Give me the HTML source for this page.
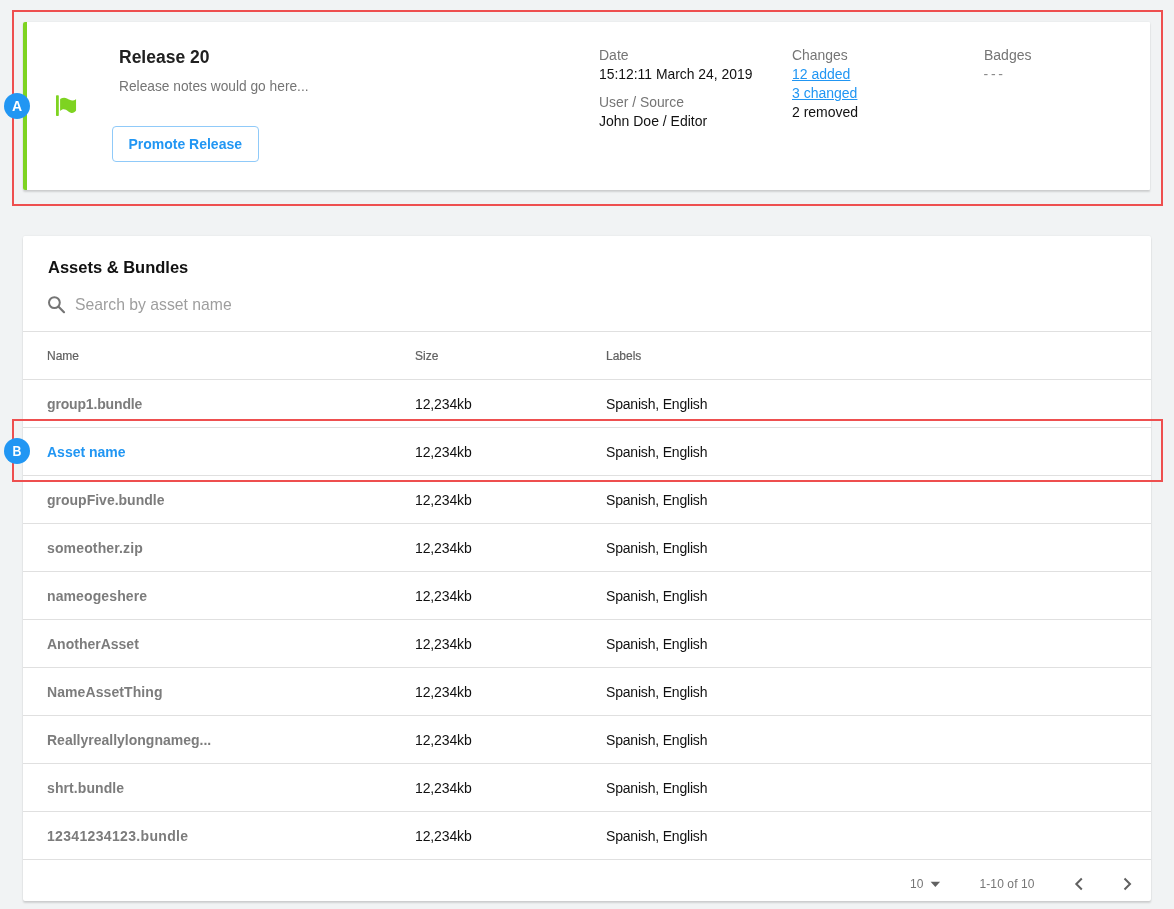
<!DOCTYPE html>
<html><head><meta charset="utf-8">
<style>
*{box-sizing:border-box;margin:0;padding:0}
html,body{width:1174px;height:909px;overflow:hidden}
body{background:#f1f3f4;font-family:"Liberation Sans",sans-serif;position:relative;color:#000}
.abs{position:absolute;white-space:nowrap}
.t{position:absolute;white-space:nowrap}
.card{position:absolute;background:#fff;border-radius:2px;box-shadow:0 2px 2px rgba(0,0,0,.14),0 0 2px rgba(0,0,0,.08)}
.red{position:absolute;border:2px solid #ee4f4f}
.dot{position:absolute;width:26px;height:26px;border-radius:50%;background:#2196f3}
.hl{position:absolute;left:23px;width:1128px;height:1px;background:#e0e0e0}
</style></head><body><div id="wrap" style="position:absolute;left:0;top:0;width:1174px;height:909px;will-change:transform">
<div class="card" style="left:23px;top:22px;width:1127px;height:168px;overflow:hidden;border-radius:2px 1px 1px 2px"><div style="position:absolute;left:0;top:0;width:4px;height:100%;background:#7ed321"></div></div>
<div class="card" style="left:23px;top:236px;width:1128px;height:665px"></div>
<svg class="abs" style="left:50px;top:90px" width="34" height="32" viewBox="0 0 34 32"><rect x="6" y="5.3" width="2.8" height="20.6" rx="0.7" fill="#7ed321"/><path d="M10.1 9.6 Q10.1 9 11 8.6 C12.5 7.8 15 7.4 17 8.6 C19 9.8 21 10.8 23 10.5 C24.5 10.2 25.5 9.6 26.05 8.9 L26.05 20.6 C25 22.5 23 23.2 21.5 23 C19.5 22.7 18 21 16 19.8 C14 18.7 12 19 10.1 21 Z" fill="#7ed321"/></svg>

<div class="t" style="left:119px;top:47px;font-size:17.5px;line-height:20px;font-weight:bold;color:#212121">Release 20</div>
<div class="t" style="left:119px;top:79px;font-size:13.75px;line-height:15px;color:#757575">Release notes would go here...</div>
<div class="abs" style="left:112px;top:126px;width:147px;height:36px;border:1px solid #90caf9;border-radius:4px"></div>
<div class="t" style="left:128.4px;top:136px;font-size:14px;line-height:16px;font-weight:bold;color:#2196f3">Promote Release</div>
<div class="t" style="left:599px;top:47px;font-size:14px;line-height:16px;color:#757575">Date</div>
<div class="t" style="left:599px;top:66px;font-size:13.9px;line-height:16px;color:#111">15:12:11 March 24, 2019</div>
<div class="t" style="left:599px;top:94px;font-size:13.9px;line-height:16px;color:#757575">User / Source</div>
<div class="t" style="left:599px;top:113px;font-size:14px;line-height:16px;color:#111">John Doe / Editor</div>
<div class="t" style="left:792px;top:47px;font-size:13.9px;line-height:16px;color:#757575">Changes</div>
<div class="t" style="left:792px;top:66px;font-size:14px;line-height:16px;color:#2196f3;text-decoration:underline">12 added</div>
<div class="t" style="left:792px;top:85px;font-size:14px;line-height:16px;color:#2196f3;text-decoration:underline">3 changed</div>
<div class="t" style="left:792px;top:104px;font-size:14px;line-height:16px;color:#111">2 removed</div>
<div class="t" style="left:984px;top:47px;font-size:14px;line-height:16px;color:#757575">Badges</div>
<div class="t" style="left:983.5px;top:66px;font-size:14px;line-height:16px;color:#8c8c8c;word-spacing:-1.15px">- - -</div>
<div class="t" style="left:48px;top:258px;font-size:16.5px;line-height:18px;font-weight:bold;color:#111">Assets &amp; Bundles</div>
<svg class="abs" style="left:47px;top:295px" width="20" height="20" viewBox="0 0 20 20"><circle cx="7.4" cy="7.6" r="5.4" fill="none" stroke="#757575" stroke-width="2"/><path d="M11.6 11.8 L17 17.2" stroke="#757575" stroke-width="2.2" stroke-linecap="round"/></svg>
<div class="t" style="left:75px;top:296px;font-size:15.75px;line-height:17px;color:#9e9e9e">Search by asset name</div>
<div class="hl" style="top:331px"></div>
<div class="t" style="left:47px;top:349px;font-size:12px;line-height:14px;color:#616161;-webkit-text-stroke:0.2px #616161">Name</div>
<div class="t" style="left:415px;top:349px;font-size:12px;line-height:14px;color:#616161;-webkit-text-stroke:0.2px #616161">Size</div>
<div class="t" style="left:606px;top:349px;font-size:12px;line-height:14px;color:#616161;-webkit-text-stroke:0.2px #616161">Labels</div>
<div class="hl" style="top:379px"></div>
<div class="t" style="left:47px;top:396px;font-size:14px;line-height:16px;font-weight:bold;color:#7c7c7c;letter-spacing:-0.16px">group1.bundle</div>
<div class="t" style="left:415px;top:396px;font-size:14px;line-height:16px;color:#111;letter-spacing:-0.12px">12,234kb</div>
<div class="t" style="left:606px;top:396px;font-size:14px;line-height:16px;color:#111;letter-spacing:-0.19px">Spanish, English</div>
<div class="hl" style="top:427px"></div>
<div class="t" style="left:47px;top:444px;font-size:14px;line-height:16px;font-weight:bold;color:#2196f3;letter-spacing:0px">Asset name</div>
<div class="t" style="left:415px;top:444px;font-size:14px;line-height:16px;color:#111;letter-spacing:-0.12px">12,234kb</div>
<div class="t" style="left:606px;top:444px;font-size:14px;line-height:16px;color:#111;letter-spacing:-0.19px">Spanish, English</div>
<div class="hl" style="top:475px"></div>
<div class="t" style="left:47px;top:492px;font-size:14px;line-height:16px;font-weight:bold;color:#7c7c7c;letter-spacing:0px">groupFive.bundle</div>
<div class="t" style="left:415px;top:492px;font-size:14px;line-height:16px;color:#111;letter-spacing:-0.12px">12,234kb</div>
<div class="t" style="left:606px;top:492px;font-size:14px;line-height:16px;color:#111;letter-spacing:-0.19px">Spanish, English</div>
<div class="hl" style="top:523px"></div>
<div class="t" style="left:47px;top:540px;font-size:14px;line-height:16px;font-weight:bold;color:#7c7c7c;letter-spacing:0.14px">someother.zip</div>
<div class="t" style="left:415px;top:540px;font-size:14px;line-height:16px;color:#111;letter-spacing:-0.12px">12,234kb</div>
<div class="t" style="left:606px;top:540px;font-size:14px;line-height:16px;color:#111;letter-spacing:-0.19px">Spanish, English</div>
<div class="hl" style="top:571px"></div>
<div class="t" style="left:47px;top:588px;font-size:14px;line-height:16px;font-weight:bold;color:#7c7c7c;letter-spacing:0.11px">nameogeshere</div>
<div class="t" style="left:415px;top:588px;font-size:14px;line-height:16px;color:#111;letter-spacing:-0.12px">12,234kb</div>
<div class="t" style="left:606px;top:588px;font-size:14px;line-height:16px;color:#111;letter-spacing:-0.19px">Spanish, English</div>
<div class="hl" style="top:619px"></div>
<div class="t" style="left:47px;top:636px;font-size:14px;line-height:16px;font-weight:bold;color:#7c7c7c;letter-spacing:0px">AnotherAsset</div>
<div class="t" style="left:415px;top:636px;font-size:14px;line-height:16px;color:#111;letter-spacing:-0.12px">12,234kb</div>
<div class="t" style="left:606px;top:636px;font-size:14px;line-height:16px;color:#111;letter-spacing:-0.19px">Spanish, English</div>
<div class="hl" style="top:667px"></div>
<div class="t" style="left:47px;top:684px;font-size:14px;line-height:16px;font-weight:bold;color:#7c7c7c;letter-spacing:0.09px">NameAssetThing</div>
<div class="t" style="left:415px;top:684px;font-size:14px;line-height:16px;color:#111;letter-spacing:-0.12px">12,234kb</div>
<div class="t" style="left:606px;top:684px;font-size:14px;line-height:16px;color:#111;letter-spacing:-0.19px">Spanish, English</div>
<div class="hl" style="top:715px"></div>
<div class="t" style="left:47px;top:732px;font-size:14px;line-height:16px;font-weight:bold;color:#7c7c7c;letter-spacing:0px">Reallyreallylongnameg...</div>
<div class="t" style="left:415px;top:732px;font-size:14px;line-height:16px;color:#111;letter-spacing:-0.12px">12,234kb</div>
<div class="t" style="left:606px;top:732px;font-size:14px;line-height:16px;color:#111;letter-spacing:-0.19px">Spanish, English</div>
<div class="hl" style="top:763px"></div>
<div class="t" style="left:47px;top:780px;font-size:14px;line-height:16px;font-weight:bold;color:#7c7c7c;letter-spacing:0.09px">shrt.bundle</div>
<div class="t" style="left:415px;top:780px;font-size:14px;line-height:16px;color:#111;letter-spacing:-0.12px">12,234kb</div>
<div class="t" style="left:606px;top:780px;font-size:14px;line-height:16px;color:#111;letter-spacing:-0.19px">Spanish, English</div>
<div class="hl" style="top:811px"></div>
<div class="t" style="left:47px;top:828px;font-size:14px;line-height:16px;font-weight:bold;color:#7c7c7c;letter-spacing:0.33px">12341234123.bundle</div>
<div class="t" style="left:415px;top:828px;font-size:14px;line-height:16px;color:#111;letter-spacing:-0.12px">12,234kb</div>
<div class="t" style="left:606px;top:828px;font-size:14px;line-height:16px;color:#111;letter-spacing:-0.19px">Spanish, English</div>
<div class="hl" style="top:859px"></div>
<div class="t" style="left:910px;top:877px;font-size:12px;line-height:14px;color:#757575">10</div>
<svg class="abs" style="left:929px;top:880px" width="12" height="8" viewBox="0 0 12 8"><path d="M1.6 1.8 L11.1 1.8 L6.35 6.9 Z" fill="#616161"/></svg>
<div class="t" style="left:979.5px;top:877px;font-size:12px;line-height:14px;color:#757575;letter-spacing:0.1px">1-10 of 10</div>
<svg class="abs" style="left:1072px;top:875.7px" width="14" height="16" viewBox="0 0 14 16"><path d="M9.8 2.5 L4.3 8 L9.8 13.5" fill="none" stroke="#606060" stroke-width="2"/></svg>
<svg class="abs" style="left:1120px;top:875.7px" width="14" height="16" viewBox="0 0 14 16"><path d="M4.5 2.5 L10 8 L4.5 13.5" fill="none" stroke="#606060" stroke-width="2"/></svg>
<div class="red" style="left:12px;top:10px;width:1151px;height:196px"></div>
<div class="red" style="left:12px;top:419px;width:1151px;height:63px"></div>
<div class="dot" style="left:4px;top:93px"></div>
<div class="dot" style="left:4px;top:438px"></div>
<div class="t" style="left:12.1px;top:98px;font-size:14px;line-height:16px;font-weight:bold;color:#fff;width:10px">A</div>
<div class="t" style="left:11.7px;top:443px;font-size:14px;line-height:16px;font-weight:bold;color:#fff;transform:scaleX(0.88)">B</div>
</div></body></html>
